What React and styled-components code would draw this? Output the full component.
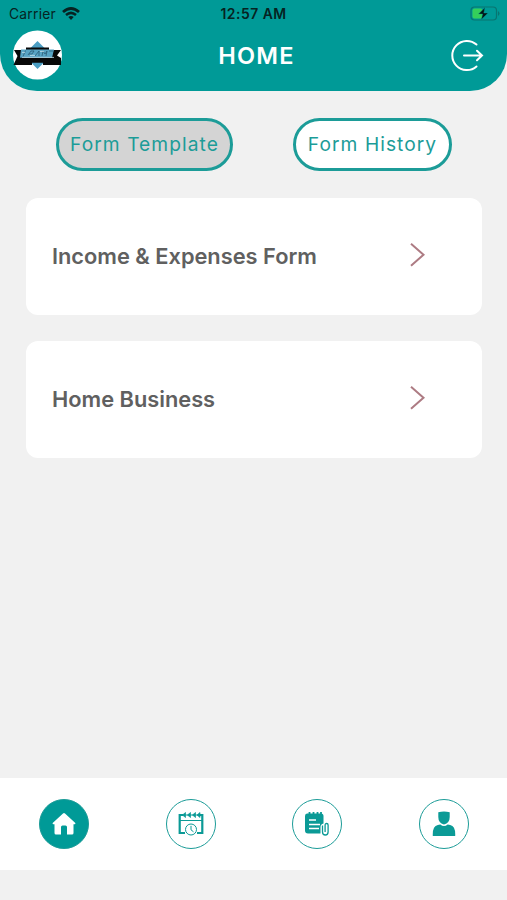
import React from "react";
import styled, { createGlobalStyle } from "styled-components";

const GlobalStyle = createGlobalStyle`
  * { box-sizing: border-box; }
  body {
    margin: 0;
    background: #f1f1f1;
    font-family: Inter, "Liberation Sans", sans-serif;
  }
`;

const Screen = styled.div`
  display: flex;
  flex-direction: column;
  width: 100%;
  max-width: 507px;
  height: 900px;
  margin: 0 auto;
  padding-bottom: 30px;
  background: #f1f1f1;
`;

const Header = styled.header`
  height: 91px;
  background: #009a97;
  border-radius: 0 0 37px 37px;
`;

const StatusBar = styled.div`
  display: grid;
  grid-template-columns: 1fr auto 1fr;
  align-items: center;
  height: 27px;
  padding: 0 7px 0 9px;
  color: #062322;
  font-size: 13.8px;
`;

const Carrier = styled.div`
  display: flex;
  align-items: center;
  gap: 6px;
  letter-spacing: 0.25px;
`;

const Time = styled.span`
  position: relative;
  left: -1px;
  font-weight: 600;
  font-size: 13.9px;
  letter-spacing: 0.5px;
`;

const Battery = styled.svg`
  justify-self: end;
`;

const TitleBar = styled.div`
  display: grid;
  grid-template-columns: 50px 1fr 50px;
  align-items: center;
  height: 56px;
  padding: 0 23px 0 12px;
`;

const Title = styled.h1`
  margin: 0;
  padding-left: 17px;
  color: #fff;
  font-size: 23.5px;
  font-weight: 600;
  letter-spacing: 1.2px;
  text-align: center;
`;

const LogoutButton = styled.button`
  display: flex;
  justify-content: flex-end;
  padding: 0;
  border: 0;
  background: none;
`;

const Tabs = styled.div`
  display: flex;
  justify-content: space-between;
  padding: 27px 55px 27px 56px;
`;

const Tab = styled.button`
  width: ${(props) => props.$width}px;
  height: 53px;
  padding: 0 0 1px;
  border: 3px solid #1c9c98;
  border-radius: 27px;
  background: ${(props) => (props.$active ? "#d4d4d4" : "#fff")};
  color: #1c9c98;
  font-family: inherit;
  font-size: 19.2px;
  letter-spacing: 1.05px;
  white-space: nowrap;
`;

const FormList = styled.main`
  display: flex;
  flex: 1;
  flex-direction: column;
  gap: 26px;
  padding: 0 25px 0 26px;
`;

const FormCard = styled.div`
  display: flex;
  align-items: center;
  justify-content: space-between;
  height: 117px;
  padding: 0 56px 2px 26px;
  border-radius: 12px;
  background: #fff;
`;

const FormName = styled.span`
  color: #606060;
  font-size: 21.8px;
  font-weight: 600;
`;

const BottomNav = styled.nav`
  display: flex;
  align-items: center;
  justify-content: space-between;
  height: 92px;
  padding: 0 38px 0 39px;
  background: #fff;
`;

const NavItem = styled.button`
  display: flex;
  align-items: center;
  justify-content: center;
  width: 50px;
  height: 50px;
  padding: 0;
  border: 1.5px solid #1c9c98;
  border-radius: 50%;
  background: ${(props) => (props.$active ? "#009a97" : "#fff")};
  color: ${(props) => (props.$active ? "#fff" : "#0b9a96")};
`;

const WifiIcon = () => (
  <svg width="18" height="14" viewBox="0 0 18 14" fill="none" stroke="#062322">
    <path d="M1 5Q9-2 17 5" strokeWidth="2.8" />
    <path d="M4 8Q9 3.7 14 8" strokeWidth="2.5" />
    <path d="M6.3 10.1Q9 8 11.7 10.1L9 13Z" fill="#062322" stroke="none" />
  </svg>
);

const BatteryIcon = () => (
  <Battery width="30" height="15" viewBox="0 0 30 15">
    <rect x="1" y="1" width="25.5" height="13" rx="3.5" fill="none" stroke="#087571" strokeWidth="1.2" />
    <rect x="2.5" y="2.5" width="10" height="10" rx="2" fill="#35cf5b" />
    <path d="M28 5q3 2.5 0 5z" fill="#087571" />
    <path d="M15 1.5 8.5 8h4.2l-1.4 5.5L18 7h-4.2z" fill="#031514" stroke="#009a97" strokeWidth=".4" />
  </Battery>
);

const Logo = () => (
  <svg width="50" height="50" viewBox="0 0 50 50">
    <circle cx="25.5" cy="25" r="24.5" fill="#fff" />
    <path d="m25.5 11 14 14-14 14-14-14z" fill="#4b9dc2" />
    <path d="M14 17.5h23V20h12l-4 5.5 4 2.500V35H31v-2.300H20V35H1.500l4-9L2 20h12z" fill="#080808" />
    <path d="M9 19.500h33l-2 8.300H8z" fill="#58a4c4" />
    <path d="M11 26.500l2.500-6M16 25l3-4h3l-2 3h-3m6 2 4-5v5m3 0 1-5 2 3 2-3-1 5m3-5h4" fill="none" stroke="#24536b" strokeWidth=".7" />
    <path d="M10 27.400h32m-32-5h3m5 3h5m5-4h4" stroke="#c8e2ec" strokeWidth=".8" />
  </svg>
);

const LogoutIcon = () => (
  <svg width="33" height="33" viewBox="0 0 33 33" fill="none" stroke="#fff" strokeWidth="2" strokeLinecap="round">
    <path d="M25.5 5.5A14.6 14.6 0 1 0 25.5 27.5" />
    <path d="M13 16.5h18m-5-4.7 5 4.7-5 4.7" />
  </svg>
);

const Chevron = () => (
  <svg width="18" height="26" viewBox="0 0 18 26" fill="none" stroke="#ad7b83" strokeWidth="2">
    <path d="m3 .8 12.5 11L3 22.8" />
  </svg>
);

const HomeIcon = () => (
  <svg width="24" height="24" viewBox="0 0 24 24" fill="currentColor">
    <path d="M11 1.5q1-.8 2 0L23.3 11q.5 1.3-.8 1.3H21.500V21q0 1.5-1.5 1.5h-5V15q0-1.5-1.5-1.5h-3Q9 13.5 9 15v7.5H4Q2.5 22.5 2.500 21v-8.700H1.500q-1.300 0-.8-1.300z" />
  </svg>
);

const CalendarIcon = () => (
  <svg width="26" height="26" viewBox="0 0 26 26" fill="none" stroke="currentColor">
    <path d="M7 22H1.700V4H5m16 0h3.300v18H19" strokeWidth="2.200" />
    <path d="M2 9.500h22M4 4h18" />
    <path d="M7.500 1.500v5L4.500 4zm5 0v5l-3-2.500zm5 0v5l-3-2.500zm4.500 0v5l-3-2.500z" fill="currentColor" strokeWidth=".7" />
    <circle cx="13" cy="18.500" r="5.500" fill="#fff" />
    <path d="M13 14.800v4l2.500 2" />
  </svg>
);

const NotesIcon = () => (
  <svg width="26" height="26" viewBox="0 0 26 26" fill="none" stroke="currentColor">
    <path d="M3 2.500h14q2.500 0 2.500 2.500v7.500q-3 .5-3 3.500v6.500H4q-3 0-3-3V5q0-2.500 2-2.500z" fill="currentColor" stroke="none" />
    <path d="M5.500 1v4m4-4v4m4-4v4m3.500-4v4" strokeWidth="1.800" />
    <path d="M5 9h7m-7 4.500h11M5 17.500h10" stroke="#fff" strokeWidth="1.300" />
    <path d="M18.500 14.500V21q0 3 2.800 3t2.800-3v-7q0-1.500-1.500-1.500T21.100 14v7" strokeWidth="1.300" />
  </svg>
);

const ProfileIcon = () => (
  <svg width="24" height="26" viewBox="0 0 24 26" fill="currentColor">
    <path d="M6.300 1.200q5.700-1.500 11.400 0v4.800q0 6-5.700 7.500-5.700-1.500-5.700-7.500zM.8 25q-.5-10 5-11l2.500-.5q3.700 3 7.400 0l2.500.5q5.500 1 5 11z" />
  </svg>
);

const forms = ["Income & Expenses Form", "Home Business"];

const App = () => {
  return (
    <>
      <GlobalStyle />
      <Screen>
        <Header>
          <StatusBar>
            <Carrier>
              Carrier
              <WifiIcon />
            </Carrier>
            <Time>12:57 AM</Time>
            <BatteryIcon />
          </StatusBar>
          <TitleBar>
            <Logo />
            <Title>HOME</Title>
            <LogoutButton aria-label="Log out">
              <LogoutIcon />
            </LogoutButton>
          </TitleBar>
        </Header>
        <Tabs>
          <Tab $width={177} $active>Form Template</Tab>
          <Tab $width={159}>Form History</Tab>
        </Tabs>
        <FormList>
          {forms.map((name) => (
            <FormCard key={name}>
              <FormName>{name}</FormName>
              <Chevron />
            </FormCard>
          ))}
        </FormList>
        <BottomNav>
          <NavItem $active aria-label="Home"><HomeIcon /></NavItem>
          <NavItem aria-label="Calendar"><CalendarIcon /></NavItem>
          <NavItem aria-label="Forms"><NotesIcon /></NavItem>
          <NavItem aria-label="Profile"><ProfileIcon /></NavItem>
        </BottomNav>
      </Screen>
    </>
  );
};
export default App;
